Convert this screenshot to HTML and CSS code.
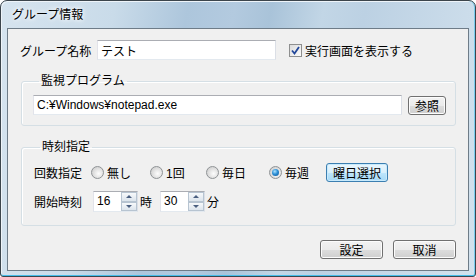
FILE: index.html
```html
<!DOCTYPE html>
<html>
  <head>
    <title>グループ情報</title>
    <link rel="stylesheet" href="styles.css">
  </head>
  <body>
    <div class="window">
      <div class="titlebar">グループ情報</div>
      <div class="client">
        <div class="row name-row">
          <span class="name-label">グループ名称</span>
          <input class="textbox name-box" type="text" value="テスト" />
          <span class="check">
            <svg width="9" height="9" viewBox="0 0 9 9">
              <polyline points="1,4.5 3.5,7.5 8,1" fill="none" stroke="#22479a" stroke-width="1.8" />
            </svg>
          </span>
          <span class="check-label">実行画面を表示する</span>
        </div>

        <fieldset class="group prog-group">
          <legend>監視プログラム</legend>
          <div class="row">
            <input class="textbox path-box" type="text" value="C:¥Windows¥notepad.exe" />
            <button class="btn ref-btn">参照</button>
          </div>
        </fieldset>

        <fieldset class="group time-group">
          <legend>時刻指定</legend>
          <div class="count-row">
            <span>回数指定</span>
            <span class="opt"><span class="radio"></span>無し</span>
            <span class="opt"><span class="radio"></span>1回</span>
            <span class="opt"><span class="radio"></span>毎日</span>
            <span class="opt"><span class="radio on"></span>毎週</span>
            <button class="btn btn-hot">曜日選択</button>
          </div>
          <div class="row start-row">
            <span class="start-label">開始時刻</span>
            <span class="spin">
              <span class="spin-val">16</span>
              <span class="spin-btns"><span class="spin-up"></span><span class="spin-down"></span></span>
            </span>
            <span class="unit">時</span>
            <span class="spin">
              <span class="spin-val">30</span>
              <span class="spin-btns"><span class="spin-up"></span><span class="spin-down"></span></span>
            </span>
            <span class="unit">分</span>
          </div>
        </fieldset>

        <div class="actions">
          <button class="btn act-btn">設定</button>
          <button class="btn act-btn">取消</button>
        </div>
      </div>
    </div>
  </body>
</html>
```

FILE: styles.css
```css
body {
  margin: 0;
  background: #ffffff;
  font-family: "Liberation Sans", "Noto Sans CJK JP", sans-serif;
  font-size: 12px;
  color: #000;
}
.window {
  width: 476px;
  height: 277px;
  box-sizing: border-box;
  border: 1px solid #3c454c;
  border-radius: 7px 7px 3px 3px;
  padding: 0 6px 5px 6px;
  display: flex;
  flex-direction: column;
  background: linear-gradient(100deg, #d6e4ef 0%, #c9dbe9 22%, #adc6dc 36%, #b3cadf 45%, #a9c3d9 52%, #c2d6e6 62%, #bcd1e3 70%, #d3e2ee 100%);
  box-shadow: inset 0 -1px 0 #45bde9, inset -1px 0 0 #78cdee, inset 1px 1px 0 #eef4f9;
}
.titlebar {
  height: 27px;
  line-height: 29px;
  padding-left: 5px;
  text-shadow: 0 0 4px #ffffff, 0 0 6px #ffffff;
}
.client {
  flex: 1;
  border: 1px solid #6e7c88;
  background: #f0f0f0;
  padding: 11px 12px 0 12px;
}
.row {
  display: flex;
  align-items: center;
}
.name-label {
  width: 77px;
}
.textbox {
  box-sizing: border-box;
  height: 20px;
  border: 1px solid;
  border-color: #abadb3 #dbdfe6 #e3e9ef #e2e3ea;
  background: #fff;
  padding: 0 3px;
  font-family: inherit;
  font-size: 12px;
  color: #000;
}
.name-box {
  width: 179px;
}
.check {
  box-sizing: border-box;
  width: 13px;
  height: 13px;
  margin-left: 13px;
  border: 1px solid #8e8f8f;
  background: linear-gradient(135deg, #dcdcdc, #fbfbfb);
  display: flex;
  align-items: center;
  justify-content: center;
}
.check-label {
  margin-left: 3px;
}
.group {
  border: 1px solid #d5dfe5;
  border-radius: 3px;
  margin: 14px 0 0 1px;
  box-shadow: inset 1px 1px 0 #fff;
}
.group legend {
  padding: 0 2px;
  margin-left: 6px;
  line-height: 14px;
}
.prog-group {
  padding: 7px 9px 10px 11px;
}
.path-box {
  flex: 1;
}
.btn {
  box-sizing: border-box;
  height: 19px;
  border: 1px solid #707070;
  border-radius: 3px;
  background: linear-gradient(#f2f2f2 0%, #ebebeb 50%, #dddddd 51%, #cfcfcf 100%);
  box-shadow: inset 0 0 0 1px #fcfcfc;
  font-family: inherit;
  font-size: 12px;
  color: #000;
  padding: 0;
}
.ref-btn {
  width: 38px;
  margin-left: 6px;
}
.time-group {
  padding: 8px 10px 13px 12px;
}
.count-row {
  display: grid;
  grid-template-columns: 57px 59px 56px 63px 57px 62px;
  align-items: center;
  height: 20px;
}
.opt {
  display: flex;
  align-items: center;
}
.radio {
  box-sizing: border-box;
  width: 13px;
  height: 13px;
  border-radius: 50%;
  border: 1px solid #8f9396;
  background: radial-gradient(circle at 60% 60%, #fdfdfd 0%, #dedede 55%, #c4c4c4 100%);
  margin-right: 3px;
  display: flex;
  align-items: center;
  justify-content: center;
}
.radio.on::after {
  content: "";
  width: 7px;
  height: 7px;
  border-radius: 50%;
  background: radial-gradient(circle at 40% 35%, #aee3ff 0%, #2c8fd6 45%, #0b4f8e 100%);
}
.btn-hot {
  border-color: #3c7fb1;
  background: linear-gradient(#eaf6fd 0%, #d9f0fc 50%, #bee6fd 51%, #a7d9f5 100%);
  box-shadow: inset 0 0 0 1px #c8eafc;
}
.start-row {
  margin-top: 9px;
}
.start-label {
  width: 59px;
}
.spin {
  box-sizing: border-box;
  width: 45px;
  height: 21px;
  border: 1px solid;
  border-color: #abadb3 #dbdfe6 #e3e9ef #e2e3ea;
  background: #fff;
  display: flex;
}
.spin-val {
  flex: 1;
  padding-left: 3px;
  line-height: 19px;
}
.spin-btns {
  width: 16px;
  display: flex;
  flex-direction: column;
}
.spin-up,
.spin-down {
  flex: 1;
  box-sizing: border-box;
  border: 1px solid #b7c4d1;
  background: linear-gradient(#f7f9fb, #dce4ec);
  display: flex;
  align-items: center;
  justify-content: center;
}
.spin-up::after {
  content: "";
  border-left: 3px solid transparent;
  border-right: 3px solid transparent;
  border-bottom: 3px solid #4a5f80;
}
.spin-down::after {
  content: "";
  border-left: 3px solid transparent;
  border-right: 3px solid transparent;
  border-top: 3px solid #4a5f80;
}
.unit {
  margin: 0 8px 0 2px;
}
.actions {
  display: flex;
  justify-content: flex-end;
  gap: 10px;
  margin-top: 14px;
}
.act-btn {
  width: 63px;
}
```
